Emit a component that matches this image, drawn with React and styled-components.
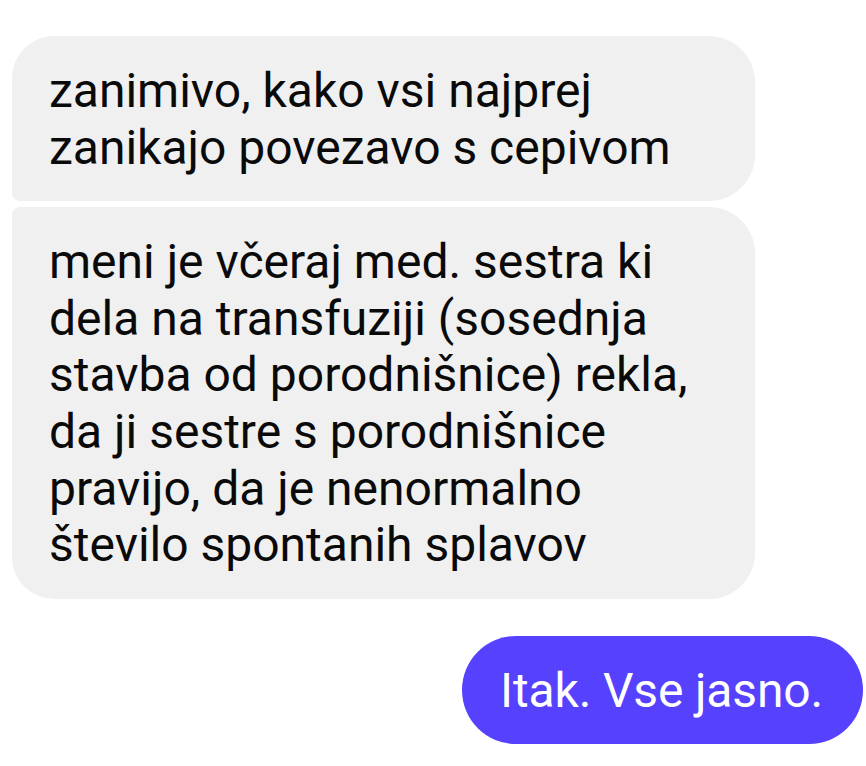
import React from "react";
import styled, { createGlobalStyle } from "styled-components";

const GlobalStyle = createGlobalStyle`
  html, body {
    margin: 0;
    padding: 0;
    background: #ffffff;
  }
  body {
    font-family: Roboto, "Noto Sans", "Liberation Sans", sans-serif;
  }
`;

const Thread = styled.div`
  display: flex;
  flex-direction: column;
  padding: 36px 3px 0 12px;
`;

const Group = styled.div`
  display: flex;
  flex-direction: column;
  gap: 6px;
  align-items: ${(p) => (p.mine ? "flex-end" : "flex-start")};
  margin-bottom: 37px;
`;

const Bubble = styled.div`
  box-sizing: border-box;
  width: ${(p) => (p.mine ? "auto" : "743px")};
  padding: ${(p) => (p.mine ? "27px 40px 25px 38px" : "27px 40px 25px 37px")};
  background: ${(p) => (p.mine ? "#5541fe" : "#f0f0f0")};
  color: ${(p) => (p.mine ? "#ffffff" : "#0a0a0a")};
  font-size: 48px;
  line-height: 56.6px;
  letter-spacing: ${(p) => (p.mine ? "-0.15px" : "0")};
  border-radius: ${(p) => p.radius};
  white-space: nowrap;
`;

const Line = styled.div``;

const received = [
  {
    radius: "42px 46px 46px 8px",
    lines: ["zanimivo, kako vsi najprej", "zanikajo povezavo s cepivom"],
  },
  {
    radius: "8px 46px 46px 42px",
    lines: [
      "meni je včeraj med. sestra ki",
      "dela na transfuziji (sosednja",
      "stavba od porodnišnice) rekla,",
      "da ji sestre s porodnišnice",
      "pravijo, da je nenormalno",
      "število spontanih splavov",
    ],
  },
];

const App = () => {
  return (
    <>
      <GlobalStyle />
      <Thread>
        <Group>
          {received.map((m, i) => (
            <Bubble key={i} radius={m.radius}>
              {m.lines.map((l) => (
                <Line key={l}>{l}</Line>
              ))}
            </Bubble>
          ))}
        </Group>
        <Group mine>
          <Bubble mine radius="54px">
            Itak. Vse jasno.
          </Bubble>
        </Group>
      </Thread>
    </>
  );
};

export default App;
